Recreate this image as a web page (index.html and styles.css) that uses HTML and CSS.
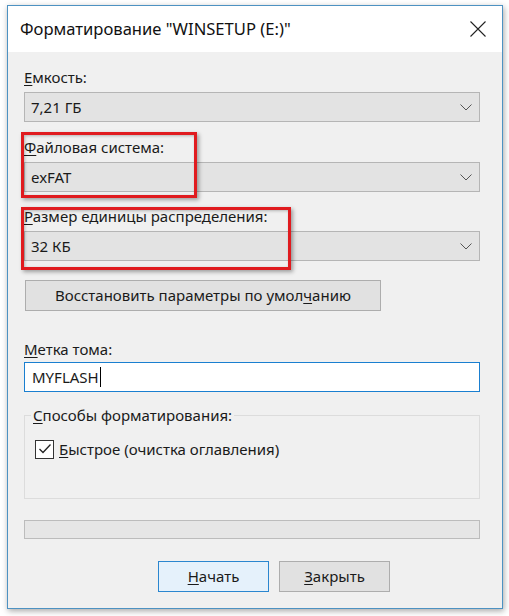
FILE: index.html
```html
<!DOCTYPE html>
<html lang="ru">
<head>
<meta charset="utf-8">
<title>Форматирование</title>
<link rel="stylesheet" href="styles.css">
</head>
<body>
<div class="window">
  <div class="titlebar">
    <span class="title">Форматирование "WINSETUP (E:)"</span>
    <svg class="close" width="16" height="16" viewBox="0 0 16 16"><path d="M0.5 0.5 L15.5 15.5 M15.5 0.5 L0.5 15.5" stroke="#222" stroke-width="1.1" fill="none"/></svg>
  </div>
  <div class="content">
    <div class="label l1"><u>Е</u>мкость:</div>
    <div class="combo"><span>7,21 ГБ</span><svg class="chev" width="12" height="7" viewBox="0 0 12 7"><path d="M0.5 0.5 L6 6 L11.5 0.5" stroke="#555" stroke-width="1" fill="none"/></svg></div>

    <div class="label l2"><u>Ф</u>айловая система:</div>
    <div class="combo"><span>exFAT</span><svg class="chev" width="12" height="7" viewBox="0 0 12 7"><path d="M0.5 0.5 L6 6 L11.5 0.5" stroke="#555" stroke-width="1" fill="none"/></svg></div>

    <div class="label l3"><u>Р</u>азмер единицы распределения:</div>
    <div class="combo"><span>32 КБ</span><svg class="chev" width="12" height="7" viewBox="0 0 12 7"><path d="M0.5 0.5 L6 6 L11.5 0.5" stroke="#555" stroke-width="1" fill="none"/></svg></div>

    <div class="btn restore">Восстановить параметры по умол<u>ч</u>анию</div>

    <div class="label l4"><u>М</u>етка тома:</div>
    <div class="textbox">MYFLASH<span class="caret"></span></div>

    <fieldset class="group">
      <legend><u>С</u>пособы форматирования:</legend>
      <div class="check-row">
        <span class="checkbox"><svg width="16" height="16" viewBox="0 0 16 16"><path d="M2.5 8 L6 11.5 L13.5 3.5" stroke="#222" stroke-width="1.3" fill="none"/></svg></span>
        <span><u>Б</u>ыстрое (очистка оглавления)</span>
      </div>
    </fieldset>

    <div class="progress"></div>

    <div class="buttons">
      <div class="btn default"><u>Н</u>ачать</div>
      <div class="btn"><u>З</u>акрыть</div>
    </div>
  </div>

  <div class="mark m1"></div>
  <div class="mark m2"></div>
</div>
</body>
</html>
```

FILE: styles.css
```css
* { box-sizing: border-box; }
html, body { margin: 0; padding: 0; background: #ffffff; }
body {
  font-family: "Noto Sans", "Open Sans", sans-serif;
  font-size: 15px;
  color: #1a1a1a;
  width: 509px;
  height: 616px;
  overflow: hidden;
}
u { text-decoration: underline; text-underline-offset: 2px; text-decoration-thickness: 1px; }

.window {
  position: relative;
  margin: 5px 0 0 7px;
  width: 496px;
  height: 604px;
  border: 1px solid #4d92c2;
  background: #f0f0f0;
  box-shadow: 1px 2px 6px rgba(0,0,0,0.35);
}

.titlebar {
  height: 46px;
  background: #ffffff;
  display: flex;
  align-items: center;
  justify-content: space-between;
  padding: 0 16px 0 12px;
}
.title { font-size: 16.6px; color: #111; padding-bottom: 1px; }
.close { margin-top: -1px; }

.content {
  padding: 0 22px 0 16px;
  display: flex;
  flex-direction: column;
}

.label { height: 20px; line-height: 20px; white-space: nowrap; }
.l1 { margin-top: 15px; }
.l2 { margin-top: 15px; }
.l3 { margin-top: 14px; }
.l4 { margin-top: 28px; }

.combo {
  margin-top: 5px;
  height: 30px;
  border: 1px solid #b5b5b5;
  background: #e3e3e3;
  display: flex;
  align-items: center;
  justify-content: space-between;
  padding: 0 7px 0 6px;
}
.combo span { padding-bottom: 1px; }

.btn {
  height: 31px;
  border: 1px solid #adadad;
  background: #e1e1e1;
  display: flex;
  align-items: center;
  justify-content: center;
  padding-bottom: 1px;
}
.restore { margin-top: 19px; margin-left: 1px; width: 356px; }

.textbox {
  margin-top: 3px;
  height: 30px;
  border: 1px solid #1a7fd0;
  background: #ffffff;
  display: flex;
  align-items: center;
  padding: 0 0 1px 7px;
}
.caret { display: inline-block; width: 1px; height: 20px; background: #000; margin-left: 1px; }

.group {
  margin: 13px 0 0 0;
  padding: 14px 0 0 10px;
  height: 94px;
  border: 1px solid #dcdcdc;
  min-width: 0;
}
.group legend {
  margin-left: -4px;
  padding: 0 2px;
  line-height: 20px;
  font-size: 15px;
}
.check-row { display: flex; align-items: center; gap: 5px; }
.checkbox {
  width: 19px;
  height: 19px;
  border: 1px solid #333;
  background: #fff;
  display: flex;
  align-items: center;
  justify-content: center;
}

.progress {
  margin-top: 21px;
  height: 19px;
  border: 1px solid #bcbcbc;
  background: #e6e6e6;
}

.buttons {
  margin-top: 22px;
  display: flex;
  gap: 10px;
  padding-left: 134px;
}
.buttons .btn { width: 111px; }
.btn.default { border-color: #2a86cf; background: #e5f1fb; }

.mark {
  position: absolute;
  border: 3px solid #e01b1f;
  box-shadow: 2px 2px 4px rgba(0,0,0,0.35), inset 1px 1px 3px rgba(0,0,0,0.25);
}
.m1 { left: 13px; top: 126px; width: 176px; height: 66px; }
.m2 { left: 13px; top: 201px; width: 270px; height: 63px; }
```
